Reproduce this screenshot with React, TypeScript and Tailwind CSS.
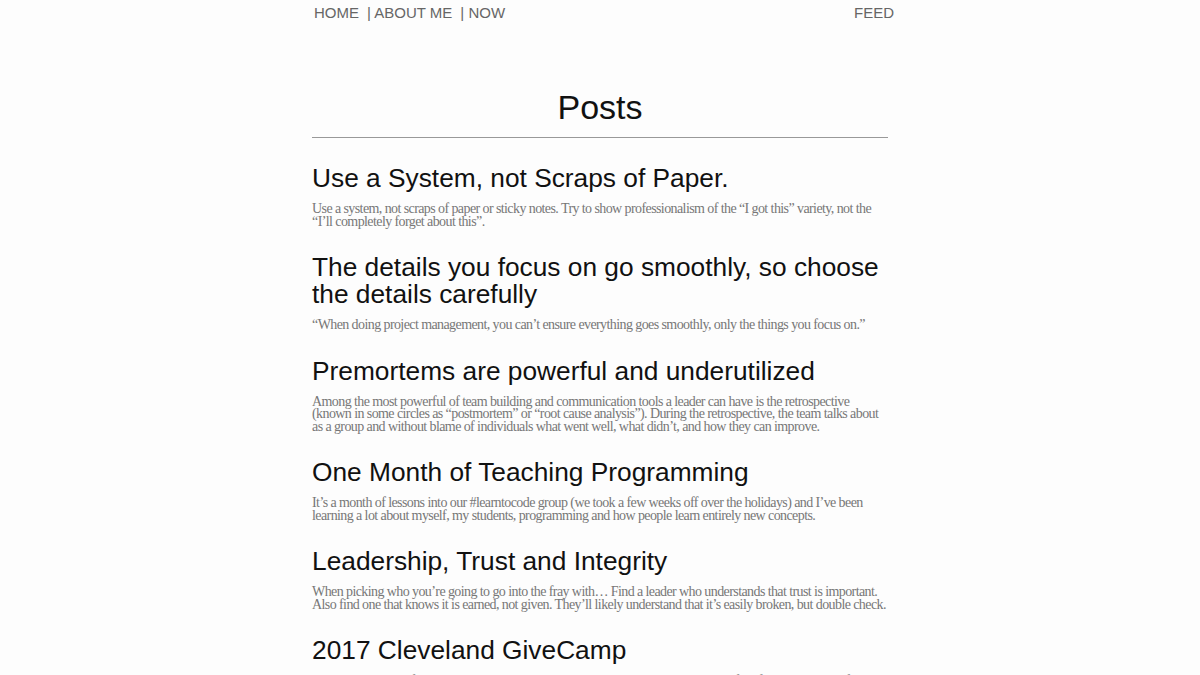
import React from 'react'

const posts = [
  {
    title: 'Use a System, not Scraps of Paper.',
    excerpt:
      'Use a system, not scraps of paper or sticky notes. Try to show professionalism of the “I got this” variety, not the “I’ll completely forget about this”.',
  },
  {
    title: 'The details you focus on go smoothly, so choose the details carefully',
    excerpt: '“When doing project management, you can’t ensure everything goes smoothly, only the things you focus on.”',
  },
  {
    title: 'Premortems are powerful and underutilized',
    excerpt:
      'Among the most powerful of team building and communication tools a leader can have is the retrospective (known in some circles as “postmortem” or “root cause analysis”). During the retrospective, the team talks about as a group and without blame of individuals what went well, what didn’t, and how they can improve.',
  },
  {
    title: 'One Month of Teaching Programming',
    excerpt:
      'It’s a month of lessons into our #learntocode group (we took a few weeks off over the holidays) and I’ve been learning a lot about myself, my students, programming and how people learn entirely new concepts.',
  },
  {
    title: 'Leadership, Trust and Integrity',
    excerpt:
      'When picking who you’re going to go into the fray with… Find a leader who understands that trust is important. Also find one that knows it is earned, not given. They’ll likely understand that it’s easily broken, but double check.',
  },
  {
    title: '2017 Cleveland GiveCamp',
    excerpt:
      'Note: This a repost from the 2017 GiveCamp, which was a joint project with a handful of volunteers who for a whole weekend built software for local nonprofits.',
  },
]

export default function App() {
  return (
    <div className="min-h-screen bg-[#fdfdfd] font-['Liberation_Sans',Arial,sans-serif]">
      <nav className="mx-auto flex w-[580px] items-center justify-between pt-[4px] text-[15px] leading-[18px] text-[#666]">
        <div className="flex">
          <a className="ml-[4px]">HOME</a>
          <a className="ml-[8px]">| ABOUT ME</a>
          <a className="ml-[8px]">| NOW</a>
        </div>
        <a className="mr-[-4px]">FEED</a>
      </nav>

      <main className="mx-auto w-[576px]">
        <h1 className="mt-[66px] text-center text-[34px] leading-[38px] text-[#111]">Posts</h1>
        <hr className="mt-[11px] border-t border-[#999]" />
        <div className="pt-[27px]">
          {posts.map(p => (
            <article key={p.title} className="mb-[26px]">
              <h2 className="text-[26.3px] leading-[27px] text-[#111]">{p.title}</h2>
              <p className="mt-[11px] w-[578px] font-['Liberation_Serif','Times_New_Roman',serif] text-[14px] leading-[12.5px] tracking-[-0.042em] text-[#777]">
                {p.excerpt}
              </p>
            </article>
          ))}
        </div>
      </main>
    </div>
  )
}
